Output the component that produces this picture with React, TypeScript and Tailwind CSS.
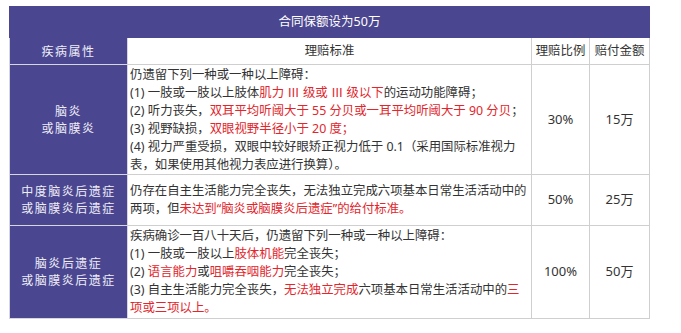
import React from "react";

const R = ({ children }: { children: React.ReactNode }) => (
  <span className="text-[#e2262c]">{children}</span>
);

const side = "bg-[#4b4690] text-[#eeeef8] text-[12px] leading-[17px] tracking-[1.5px] text-center align-middle border border-[#d6d6e2]";
const body = "border border-[#cfcfcf] px-[2px] text-left align-middle whitespace-nowrap leading-[18px]";
const num = "border border-[#cfcfcf] text-center align-middle text-[13px]";

export default function App() {
  return (
    <div
      className="h-[333px] w-[681px] bg-white pl-[9px] pt-[6px] text-[12.4px] text-[#333]"
      style={{ fontFamily: '"Noto Sans", "Noto Sans CJK SC", sans-serif' }}
    >
      <table className="w-[640px] table-fixed border-collapse">
        <colgroup>
          <col className="w-[118px]" />
          <col className="w-[404px]" />
          <col className="w-[58px]" />
          <col className="w-[60px]" />
        </colgroup>
        <tbody>
          <tr className="h-[31px]">
            <td colSpan={4} className="border border-[#4b4690] bg-[#4b4690] text-center align-middle text-[12.5px] text-white">
              合同保额设为50万
            </td>
          </tr>
          <tr className="h-[27px]">
            <td className={side}>疾病属性</td>
            <td className="border border-[#cfcfcf] text-center align-middle">理赔标准</td>
            <td className="border border-[#cfcfcf] text-center align-middle whitespace-nowrap">理赔比例</td>
            <td className="border border-[#cfcfcf] text-center align-middle whitespace-nowrap">赔付金额</td>
          </tr>
          <tr className="h-[110px]">
            <td className={side}>
              脑炎
              <br />
              或脑膜炎
            </td>
            <td className={body}>
              仍遗留下列一种或一种以上障碍：
              <br />
              (1) 一肢或一肢以上肢体<R>肌力 Ⅲ 级或 Ⅲ 级以下</R>的运动功能障碍；
              <br />
              (2) 听力丧失，<R>双耳平均听阈大于 55 分贝或一耳平均听阈大于 90 分贝</R>；
              <br />
              (3) 视野缺损，<R>双眼视野半径小于 20 度；</R>
              <br />
              (4) 视力严重受损，双眼中较好眼矫正视力低于 0.1（采用国际标准视力
              <br />
              表，如果使用其他视力表应进行换算）。
            </td>
            <td className={num}>30%</td>
            <td className={num}>15万</td>
          </tr>
          <tr className="h-[51px]">
            <td className={side}>
              中度脑炎后遗症
              <br />
              或脑膜炎后遗症
            </td>
            <td className={body + " leading-[17px]"}>
              仍存在自主生活能力完全丧失，无法独立完成六项基本日常生活活动中的
              <br />
              两项，但<R>未达到“脑炎或脑膜炎后遗症”的给付标准。</R>
            </td>
            <td className={num}>50%</td>
            <td className={num}>25万</td>
          </tr>
          <tr className="h-[93px]">
            <td className={side}>
              脑炎后遗症
              <br />
              或脑膜炎后遗症
            </td>
            <td className={body}>
              疾病确诊一百八十天后，仍遗留下列一种或一种以上障碍：
              <br />
              (1) 一肢或一肢以上<R>肢体机能</R>完全丧失；
              <br />
              (2) <R>语言能力</R>或<R>咀嚼吞咽能力</R>完全丧失；
              <br />
              (3) 自主生活能力完全丧失，<R>无法独立完成</R>六项基本日常生活活动中的<R>三</R>
              <br />
              <R>项或三项以上。</R>
            </td>
            <td className={num}>100%</td>
            <td className={num}>50万</td>
          </tr>
        </tbody>
      </table>
    </div>
  );
}
